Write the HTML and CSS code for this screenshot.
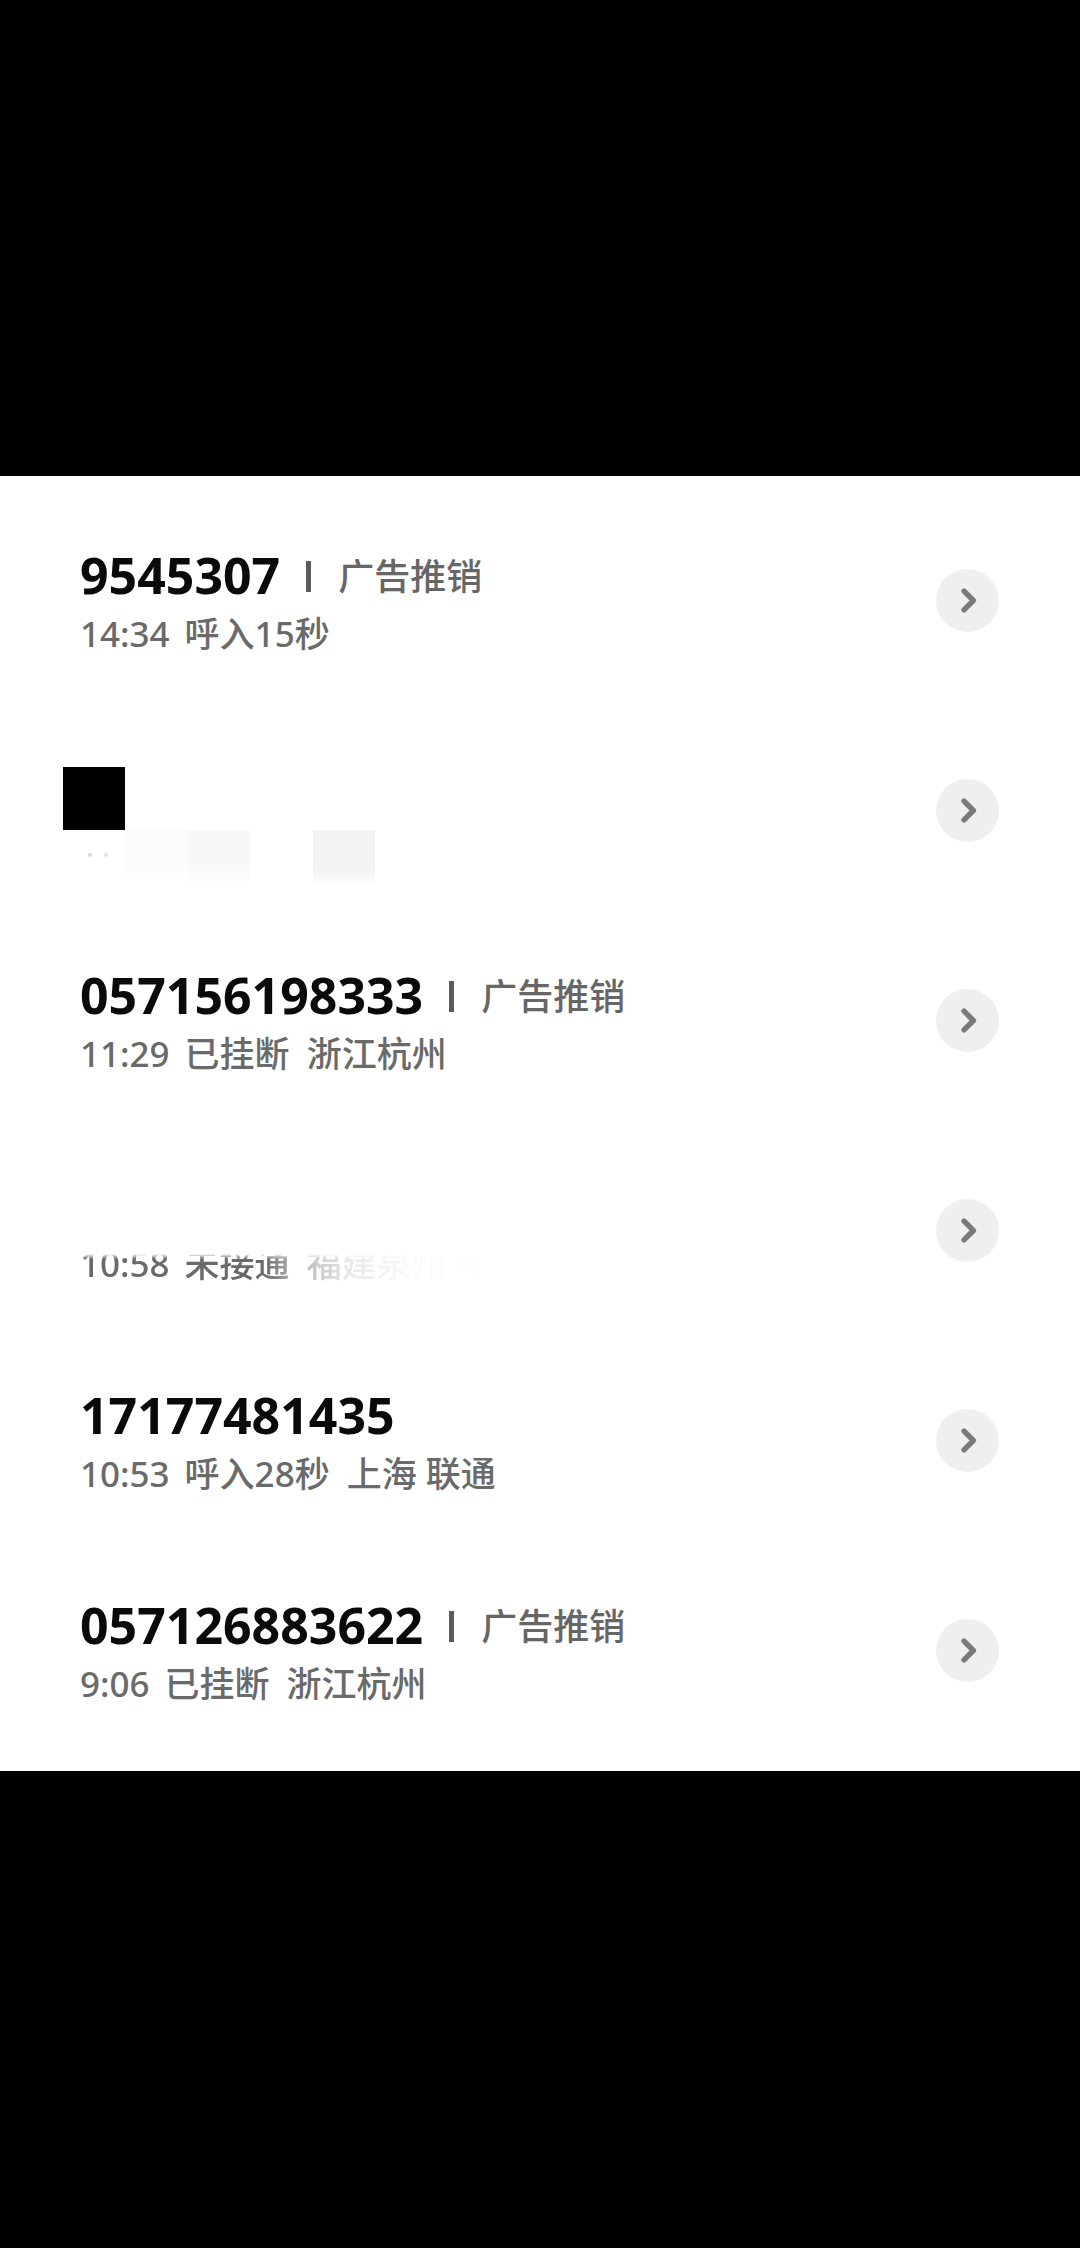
FILE: index.html
```html
<!DOCTYPE html>
<html lang="zh-CN">
<head>
  <meta charset="UTF-8">
  <meta name="viewport" content="width=device-width, initial-scale=1.0">
  <title>通话记录</title>
  <link rel="stylesheet" href="styles.css">
</head>
<body>
  <div class="top"></div>

  <ul class="calls">
    <li class="call">
      <div class="info">
        <div class="line1"><span class="num">9545307</span><span class="bar"></span><span class="tag">广告推销</span></div>
        <div class="line2"><span>14:34</span><span class="type">呼入15秒</span></div>
      </div>
      <span class="more"><svg viewBox="0 0 64 64"><path d="M28.5 22.5 L38 32 L28.5 41.5"/></svg></span>
    </li>

    <li class="call">
      <div class="redact">
        <i class="c1"></i><i></i><i></i><i></i><i></i>
        <i class="c2"></i><i class="c3"></i><i class="c4"></i><i></i><i class="c5"></i>
      </div>
      <span class="more"><svg viewBox="0 0 64 64"><path d="M28.5 22.5 L38 32 L28.5 41.5"/></svg></span>
    </li>

    <li class="call">
      <div class="info">
        <div class="line1"><span class="num">057156198333</span><span class="bar"></span><span class="tag">广告推销</span></div>
        <div class="line2"><span>11:29</span><span class="type">已挂断</span><span class="loc">浙江杭州</span></div>
      </div>
      <span class="more"><svg viewBox="0 0 64 64"><path d="M28.5 22.5 L38 32 L28.5 41.5"/></svg></span>
    </li>

    <li class="call">
      <div class="info">
        <div class="line1"></div>
        <div class="line2 fade"><div class="cut"><span>10:58</span><span class="type">未接通</span><span class="loc">福建泉州 电信</span></div></div>
      </div>
      <span class="more"><svg viewBox="0 0 64 64"><path d="M28.5 22.5 L38 32 L28.5 41.5"/></svg></span>
    </li>

    <li class="call">
      <div class="info">
        <div class="line1"><span class="num">17177481435</span></div>
        <div class="line2"><span>10:53</span><span class="type">呼入28秒</span><span class="loc">上海 联通</span></div>
      </div>
      <span class="more"><svg viewBox="0 0 64 64"><path d="M28.5 22.5 L38 32 L28.5 41.5"/></svg></span>
    </li>

    <li class="call">
      <div class="info">
        <div class="line1"><span class="num">057126883622</span><span class="bar"></span><span class="tag">广告推销</span></div>
        <div class="line2"><span>9:06</span><span class="type">已挂断</span><span class="loc">浙江杭州</span></div>
      </div>
      <span class="more"><svg viewBox="0 0 64 64"><path d="M28.5 22.5 L38 32 L28.5 41.5"/></svg></span>
    </li>
  </ul>

  <div class="bottom"></div>
</body>
</html>
```

FILE: styles.css
```css
body { margin: 0; background: #000; font-family: "Noto Sans", "Noto Sans CJK SC", sans-serif; }
.top { height: 476px; }
.bottom { height: 477px; }

.calls { list-style: none; margin: 0; padding: 19px 0 16px; background: #fff; }
.call { height: 210px; display: flex; align-items: center; justify-content: space-between; padding: 0 81px 0 80px; }

.line1 { height: 60px; line-height: 60px; font-size: 50px; white-space: nowrap; }
.num { font-weight: 700; color: #0a0a0a; }
.bar { display: inline-block; width: 5px; height: 31px; background: #5a5a5a; vertical-align: 2px; margin: 0 27px 0 26px; }
.tag { font-size: 36px; line-height: 1; font-weight: 500; color: #666; font-family: "Noto Sans CJK SC", sans-serif; vertical-align: 4px; }

.line2 { margin-top: 7px; height: 44px; line-height: 44px; font-size: 35px; font-weight: 500; color: #6a6a6a; white-space: nowrap; }
.type { margin-left: 15px; }
.loc { margin-left: 17px; }

/* blurred row */
.fade {
  -webkit-mask-image: linear-gradient(90deg, #000 0, #000 185px, rgba(0,0,0,.5) 215px, rgba(0,0,0,.15) 270px, rgba(0,0,0,.03) 330px, transparent 400px);
  mask-image: linear-gradient(90deg, #000 0, #000 185px, rgba(0,0,0,.5) 215px, rgba(0,0,0,.15) 270px, rgba(0,0,0,.03) 330px, transparent 400px);
}
.cut {
  -webkit-mask-image: linear-gradient(180deg, transparent 12px, #000 17px);
  mask-image: linear-gradient(180deg, transparent 12px, #000 17px);
}

.redact { align-self: flex-start; margin: 62px 0 0 -17.5px; display: grid; grid-template-columns: repeat(5, 62.5px); grid-template-rows: 63px 55px; }
.redact i { display: block; }
.redact .c1 { background: #000; }
.redact .c2 { background: radial-gradient(circle at 27px 25px, #d8d8d8 1.5px, transparent 2.5px), radial-gradient(circle at 43px 25px, #e2e2e2 1.5px, transparent 2.5px); }
.redact .c3 { background: linear-gradient(#fcfcfc 60%, #fff); }
.redact .c4 { background: linear-gradient(#f8f8f8 65%, #fff); }
.redact .c5 { background: linear-gradient(#f2f2f2 70%, #fff); }

.more { flex: none; width: 63px; height: 63px; border-radius: 50%; background: #efefef; display: flex; }
.more svg { width: 63px; height: 63px; fill: none; stroke: #7a7a7a; stroke-width: 5.5; stroke-linecap: round; stroke-linejoin: round; }
```
